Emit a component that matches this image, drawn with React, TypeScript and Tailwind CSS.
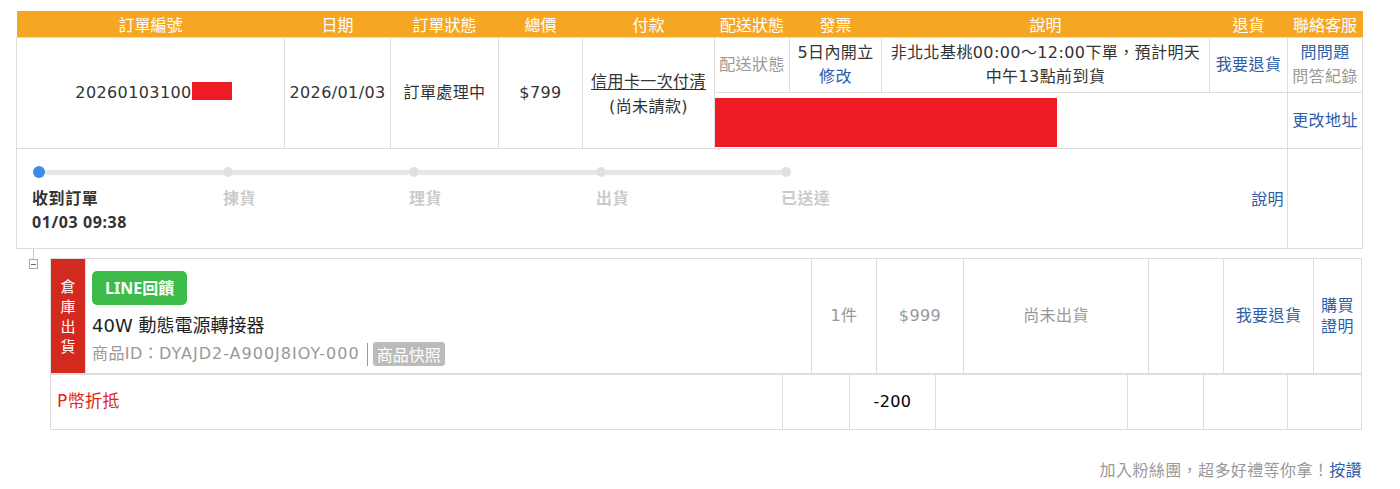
import React from 'react';

const steps = [
  { label: '收到訂單', time: '01/03 09:38', done: true, width: 'w-[190px]' },
  { label: '揀貨', done: false, width: 'w-[186px]' },
  { label: '理貨', done: false, width: 'w-[187px]' },
  { label: '出貨', done: false, width: 'w-[185px]' },
  { label: '已送達', done: false, width: 'w-[60px]' },
];

const App: React.FC = () => {
  return (
    <div className="min-h-[489px] bg-white pl-[16px] pt-[11px] text-[16px] tracking-[0.4px] text-[#333] font-['DejaVu_Sans','Noto_Sans_CJK_TC',sans-serif]">
      <div className="w-[1346px]">
        {/* Order table */}
        <table className="w-[1346px] table-fixed border-collapse">
          <colgroup>
            <col className="w-[268px]" />
            <col className="w-[106px]" />
            <col className="w-[108px]" />
            <col className="w-[84px]" />
            <col className="w-[132px]" />
            <col className="w-[75px]" />
            <col className="w-[92px]" />
            <col className="w-[328px]" />
            <col className="w-[78px]" />
            <col className="w-[75px]" />
          </colgroup>
          <thead>
            <tr className="h-[26px] bg-[#f5a623] text-white tracking-normal font-['Noto_Sans_CJK_TC',sans-serif]">
              <th className="p-0 font-normal leading-[26px]">訂單編號</th>
              <th className="p-0 font-normal leading-[26px]">日期</th>
              <th className="p-0 font-normal leading-[26px]">訂單狀態</th>
              <th className="p-0 font-normal leading-[26px]">總價</th>
              <th className="p-0 font-normal leading-[26px]">付款</th>
              <th className="p-0 font-normal leading-[26px]">配送狀態</th>
              <th className="p-0 font-normal leading-[26px]">發票</th>
              <th className="p-0 font-normal leading-[26px]">說明</th>
              <th className="p-0 font-normal leading-[26px]">退貨</th>
              <th className="p-0 font-normal leading-[26px]">聯絡客服</th>
            </tr>
          </thead>
          <tbody>
            <tr className="h-[55px]">
              <td rowSpan={2} className="border border-[#ddd] p-0 pl-[6px] text-center leading-[24px]">
                20260103100
                <span className="inline-block w-[40px] h-[18px] bg-[#ed1c24] align-[-2px]"></span>
              </td>
              <td rowSpan={2} className="border border-[#ddd] p-0 text-center leading-[24px]">2026/01/03</td>
              <td rowSpan={2} className="border border-[#ddd] p-0 text-center leading-[24px]">訂單處理中</td>
              <td rowSpan={2} className="border border-[#ddd] p-0 text-center leading-[24px]">$799</td>
              <td rowSpan={2} className="border border-[#ddd] p-0 pt-[2px] text-center leading-[25px]">
                <div className="underline underline-offset-2">信用卡一次付清</div>
                <div>(尚未請款)</div>
              </td>
              <td className="border border-[#ddd] p-0 text-center leading-[24px] text-[#999]">配送狀態</td>
              <td className="border border-[#ddd] p-0 text-center leading-[24px]">
                <div>5日內開立</div>
                <div className="text-[#2d5da9]">修改</div>
              </td>
              <td className="border border-[#ddd] p-0 text-center leading-[24px]">
                非北北基桃00:00～12:00下單，預計明天
                <br />
                中午13點前到貨
              </td>
              <td className="border border-[#ddd] p-0 text-center leading-[24px] text-[#2d5da9]">我要退貨</td>
              <td className="border border-[#ddd] p-0 text-center leading-[24px]">
                <div className="text-[#2d5da9]">問問題</div>
                <div className="text-[#999]">問答紀錄</div>
              </td>
            </tr>
            <tr className="h-[56px]">
              <td colSpan={4} className="border border-[#ddd] p-0 pt-[5px] align-top">
                <div className="w-[342px] h-[49px] bg-[#ed1c24]"></div>
              </td>
              <td className="border border-[#ddd] p-0 text-center leading-[24px] text-[#2d5da9]">更改地址</td>
            </tr>
            <tr className="h-[100px]">
              <td colSpan={9} className="border border-[#ddd] p-0 align-top">
                <div className="flex h-[98px] items-start justify-between pl-[16px] pr-[3px]">
                  {/* Progress */}
                  <div className="flex pt-[17px]">
                    {steps.map((step, i) => (
                      <div key={step.label} className={step.width}>
                        <div className="flex h-[12px] items-center">
                          {step.done ? (
                            <span className="block w-[12px] h-[12px] rounded-full bg-[#3a8ee6] shrink-0"></span>
                          ) : (
                            <span className="block w-[10px] h-[10px] rounded-full bg-[#e0e0e0] shrink-0"></span>
                          )}
                          {i < steps.length - 1 && <span className="block h-[5px] flex-1 bg-[#e6e6e6]"></span>}
                        </div>
                        <div
                          className={`mt-[8px] leading-[24px] font-bold font-['Noto_Sans','Noto_Sans_CJK_TC',sans-serif] ${
                            step.done ? 'text-[#333] -ml-[1px] tracking-[0.6px]' : 'text-[#cbcbcb]'
                          }`}
                        >
                          <div>{step.label}</div>
                          {step.time && <div>{step.time}</div>}
                        </div>
                      </div>
                    ))}
                  </div>
                  <span className="self-center mt-[4px] leading-[24px] text-[#2d5da9]">說明</span>
                </div>
              </td>
              <td className="border border-[#ddd] p-0"></td>
            </tr>
          </tbody>
        </table>

        {/* Items */}
        <div className="flex">
          <div className="flex w-[35px] flex-col items-center">
            <span className="block w-px h-[10px] bg-[#c8c8c8]"></span>
            <span className="flex w-[9px] h-[10px] items-center justify-center border border-[#aaa] bg-white">
              <span className="block w-[5px] h-px bg-[#666]"></span>
            </span>
          </div>
          <div className="pt-[9px]">
            <table className="w-[1311px] table-fixed border-collapse">
              <colgroup>
                <col className="w-[35px]" />
                <col className="w-[726px]" />
                <col className="w-[65px]" />
                <col className="w-[87px]" />
                <col className="w-[185px]" />
                <col className="w-[75px]" />
                <col className="w-[90px]" />
                <col className="w-[48px]" />
              </colgroup>
              <tbody>
                <tr className="h-[115px]">
                  <td className="border border-[#ddd] bg-[#d22a1e] p-0 text-center text-[15px] text-white leading-[20px] tracking-normal font-['Noto_Sans_CJK_TC',sans-serif]">
                    <div>倉</div>
                    <div>庫</div>
                    <div>出</div>
                    <div>貨</div>
                  </td>
                  <td className="border border-[#ddd] p-0 pl-[6px] pt-[12px] align-top">
                    <span className="inline-flex h-[34px] items-center rounded-[5px] bg-[#3dbb48] px-[13px] font-bold text-white tracking-normal font-['Noto_Sans','Noto_Sans_CJK_TC',sans-serif]">
                      LINE回饋
                    </span>
                    <div className="mt-[8px] text-[18px] leading-[26px] tracking-normal text-[#222]">40W 動態電源轉接器</div>
                    <div className="mt-[3px] flex items-center leading-[24px]">
                      <span className="text-[#999]">
                        商品ID：<span className="tracking-[1px]">DYAJD2-A900J8IOY-000</span>
                      </span>
                      <span className="ml-[7px] block w-px h-[23px] bg-[#999]"></span>
                      <span className="ml-[5px] h-[24px] rounded-[3px] bg-[#bbb] px-[4px] leading-[24px] tracking-normal text-white font-['Noto_Sans_CJK_TC',sans-serif]">
                        商品快照
                      </span>
                    </div>
                  </td>
                  <td className="border border-[#ddd] p-0 text-center text-[#999]">1件</td>
                  <td className="border border-[#ddd] p-0 text-center text-[#999]">$999</td>
                  <td className="border border-[#ddd] p-0 text-center text-[#999]">尚未出貨</td>
                  <td className="border border-[#ddd] p-0"></td>
                  <td className="border border-[#ddd] p-0 text-center text-[#2d5da9]">我要退貨</td>
                  <td className="border border-[#ddd] p-0 text-center leading-[21px] text-[#2d5da9]">
                    <div>購買</div>
                    <div>證明</div>
                  </td>
                </tr>
              </tbody>
            </table>
            <table className="w-[1311px] table-fixed border-collapse">
              <colgroup>
                <col className="w-[732px]" />
                <col className="w-[67px]" />
                <col className="w-[86px]" />
                <col className="w-[192px]" />
                <col className="w-[76px]" />
                <col className="w-[84px]" />
                <col className="w-[74px]" />
              </colgroup>
              <tbody>
                <tr className="h-[55px]">
                  <td className="border border-[#ddd] p-0 pl-[6px] text-[17px] text-[#e0261d]">P幣折抵</td>
                  <td className="border border-[#ddd] p-0"></td>
                  <td className="border border-[#ddd] p-0 text-center text-black">-200</td>
                  <td className="border border-[#ddd] p-0"></td>
                  <td className="border border-[#ddd] p-0"></td>
                  <td className="border border-[#ddd] p-0"></td>
                  <td className="border border-[#ddd] p-0"></td>
                </tr>
              </tbody>
            </table>
          </div>
        </div>

        {/* Footer */}
        <div className="mt-[29px] text-right leading-[24px] text-[#999]">
          加入粉絲團，超多好禮等你拿！<span className="text-[#2d5da9]">按讚</span>
        </div>
      </div>
    </div>
  );
};

export default App;
